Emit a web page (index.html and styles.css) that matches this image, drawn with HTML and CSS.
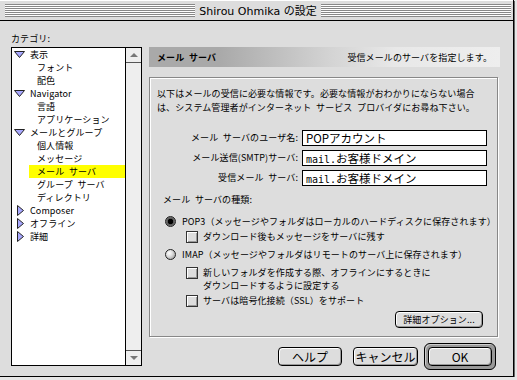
FILE: index.html
```html
<!DOCTYPE html>
<html lang="ja">
<head>
    <meta charset="UTF-8">
    <meta name="viewport" content="width=device-width, initial-scale=1.0">
    <title>Shirou Ohmika の設定</title>
    <link rel="stylesheet" href="styles.css">
</head>
<body>

    <div class="window">
        <div class="titlebar">
            <span class="stripes"></span>
            <span class="title">Shirou Ohmika の設定</span>
            <span class="stripes"></span>
        </div>

        <div class="content">
            <!-- Category tree -->
            <div class="sidebar">
                <div class="cat-label">カテゴリ:</div>
                <div class="listbox">
                    <ul class="tree">
                        <li class="row l1"><svg class="twisty" width="11" height="11"><polygon points="0.5,2.5 10.5,2.5 5.5,8.5"/></svg>表示</li>
                        <li class="row l2">フォント</li>
                        <li class="row l2">配色</li>
                        <li class="row l1"><svg class="twisty" width="11" height="11"><polygon points="0.5,2.5 10.5,2.5 5.5,8.5"/></svg>Navigator</li>
                        <li class="row l2">言語</li>
                        <li class="row l2">アプリケーション</li>
                        <li class="row l1"><svg class="twisty" width="11" height="11"><polygon points="0.5,2.5 10.5,2.5 5.5,8.5"/></svg>メールとグループ</li>
                        <li class="row l2">個人情報</li>
                        <li class="row l2">メッセージ</li>
                        <li class="row l2 sel">メール&ensp;サーバ</li>
                        <li class="row l2">グループ&ensp;サーバ</li>
                        <li class="row l2">ディレクトリ</li>
                        <li class="row l1"><svg class="twisty" width="11" height="11"><polygon points="3.5,0.5 9.5,5.5 3.5,10.5"/></svg>Composer</li>
                        <li class="row l1"><svg class="twisty" width="11" height="11"><polygon points="3.5,0.5 9.5,5.5 3.5,10.5"/></svg>オフライン</li>
                        <li class="row l1"><svg class="twisty" width="11" height="11"><polygon points="3.5,0.5 9.5,5.5 3.5,10.5"/></svg>詳細</li>
                    </ul>
                    <div class="scrollbar">
                        <div class="sb-btn up"><span class="arrow-up"></span></div>
                        <div class="sb-track"></div>
                        <div class="sb-btn down"><span class="arrow-down"></span></div>
                    </div>
                </div>
            </div>

            <!-- Panel -->
            <div class="main">
                <div class="panel-head">
                    <span class="panel-title">メール&ensp;サーバ</span>
                    <span class="panel-desc">受信メールのサーバを指定します。</span>
                </div>

                <div class="group">
                    <p class="intro">以下はメールの受信に必要な情報です。必要な情報がおわかりにならない場合<br>は、システム管理者がインターネット&ensp;サービス&ensp;プロバイダにお尋ね下さい。</p>

                    <div class="fields">
                        <div class="label">メール&ensp;サーバのユーザ名:</div>
                        <div class="input">POPアカウント</div>
                        <div class="label">メール送信(SMTP)サーバ:</div>
                        <div class="input"><span class="mono">mail.</span>お客様ドメイン</div>
                        <div class="label">受信メール&ensp;サーバ:</div>
                        <div class="input"><span class="mono">mail.</span>お客様ドメイン</div>
                    </div>

                    <div class="type-label">メール&ensp;サーバの種類:</div>

                    <div class="opt radio-row first">
                        <span class="radio on"></span>
                        <span>POP3（メッセージやフォルダはローカルのハードディスクに保存されます）</span>
                    </div>
                    <div class="opt check-row c1">
                        <span class="check-box"></span>
                        <span>ダウンロード後もメッセージをサーバに残す</span>
                    </div>
                    <div class="opt radio-row second">
                        <span class="radio"></span>
                        <span>IMAP（メッセージやフォルダはリモートのサーバ上に保存されます）</span>
                    </div>
                    <div class="opt check-row c2">
                        <span class="check-box"></span>
                        <span class="two-line">新しいフォルダを作成する際、オフラインにするときに<br>ダウンロードするように設定する</span>
                    </div>
                    <div class="opt check-row c3">
                        <span class="check-box"></span>
                        <span>サーバは暗号化接続（SSL）をサポート</span>
                    </div>

                    <div class="group-foot">
                        <button class="btn small">詳細オプション...</button>
                    </div>
                </div>

                <div class="buttons">
                    <button class="btn">ヘルプ</button>
                    <button class="btn cancel">キャンセル</button>
                    <div class="default-ring"><button class="btn">OK</button></div>
                </div>
            </div>
        </div>
    </div>

</body>
</html>
```

FILE: styles.css
```css
body {
    margin: 0;
    background-color: #e6e6e6;
    font-family: "Noto Sans CJK JP", sans-serif;
    font-size: 9px;
    letter-spacing: 0.1px;
    color: #000;
}
.window {
    width: 513px;
    height: 376px;
    background-color: #ddd;
    border-right: 1px solid #000;
    border-bottom: 1px solid #000;
    box-shadow: 1px 1px 0 #666;
    display: flex;
    flex-direction: column;
}
.titlebar {
    height: 20px;
    border-bottom: 1px solid #000;
    display: flex;
    align-items: center;
    gap: 4px;
    padding: 0 2px 0 5px;
    box-shadow: inset 0 1px #fff;
}
.stripes {
    flex: 1;
    height: 13px;
    background: repeating-linear-gradient(to bottom, #888 0 1px, #fff 1px 2px);
}
.title {
    font-family: "DejaVu Sans", "Noto Sans CJK JP", sans-serif;
    font-size: 11px;
    letter-spacing: 0;
    white-space: nowrap;
}
.content {
    flex: 1;
    display: flex;
    gap: 7px;
    padding-left: 11px;
}

/* Sidebar */
.sidebar {
    width: 131px;
    padding-top: 11px;
    display: flex;
    flex-direction: column;
}
.cat-label {
    height: 13px;
    line-height: 13px;
    margin-bottom: 2px;
}
.listbox {
    height: 319px;
    box-sizing: border-box;
    border: 1px solid #000;
    background-color: #fff;
    display: flex;
}
.tree {
    flex: 1;
    list-style: none;
    margin: 0;
    padding: 0;
}
.row {
    height: 13px;
    line-height: 13px;
    display: flex;
    align-items: center;
    white-space: nowrap;
}
.row.l1 {
    padding-left: 2px;
}
.row.l2 {
    margin-left: 17px;
    padding-left: 8px;
}
.row.sel {
    background-color: #ff0;
}
.twisty {
    margin-right: 5px;
    flex: none;
}
.twisty polygon {
    fill: #a8a8ff;
    stroke: #222;
    stroke-width: 1;
}
.scrollbar {
    width: 15px;
    border-left: 1px solid #000;
    background-color: #eee;
    display: flex;
    flex-direction: column;
}
.sb-btn {
    height: 14px;
    display: flex;
    align-items: center;
    justify-content: center;
}
.sb-btn.up {
    border-bottom: 1px solid #555;
}
.sb-btn.down {
    border-top: 1px solid #555;
}
.sb-track {
    flex: 1;
}
.arrow-up {
    width: 0;
    height: 0;
    border-left: 4px solid transparent;
    border-right: 4px solid transparent;
    border-bottom: 4px solid #777;
}
.arrow-down {
    width: 0;
    height: 0;
    border-left: 4px solid transparent;
    border-right: 4px solid transparent;
    border-top: 4px solid #777;
}

/* Panel */
.main {
    width: 349px;
    padding-top: 26px;
    display: flex;
    flex-direction: column;
}
.panel-head {
    height: 20px;
    margin-right: -2px;
    padding: 0 8px 0 8px;
    display: flex;
    align-items: center;
    justify-content: space-between;
    background: linear-gradient(to right, #a9a9a9 0, #a9a9a9 20%, #d4d4d4 52%, #e8e8e8 70%, #eee 100%);
}
.panel-title {
    font-weight: bold;
}
.group {
    margin-top: 10px;
    height: 260px;
    box-sizing: border-box;
    border: 1px solid #888;
    box-shadow: inset 1px 1px #fff, 1px 1px #fff;
    padding: 9px 7px 0 7px;
    display: flex;
    flex-direction: column;
}
.intro {
    margin: 0;
    line-height: 14px;
    white-space: nowrap;
}
.fields {
    display: grid;
    grid-template-columns: 141px 185px;
    column-gap: 4px;
    row-gap: 4px;
    margin-top: 15px;
}
.label {
    text-align: right;
    line-height: 16px;
    white-space: nowrap;
}
.input {
    height: 16px;
    box-sizing: border-box;
    border: 1px solid #000;
    background-color: #fff;
    padding-left: 3px;
    font-size: 11.5px;
    letter-spacing: 0;
    line-height: 14px;
    white-space: nowrap;
}
.mono {
    font-family: "DejaVu Sans Mono", monospace;
    font-size: 10px;
}
.type-label {
    margin: 7px 0 0 6px;
    line-height: 13px;
}
.opt {
    display: flex;
    align-items: flex-start;
    line-height: 13px;
    white-space: nowrap;
}
.radio-row {
    margin-left: 8px;
    gap: 6px;
}
.radio-row.first {
    margin-top: 9px;
}
.radio-row.second {
    margin-top: 5px;
}
.check-row {
    margin-left: 29px;
    gap: 5px;
}
.check-row.c1 {
    margin-top: 2px;
}
.check-row.c2 {
    margin-top: 5px;
}
.check-row.c3 {
    margin-top: 2px;
}
.radio {
    width: 11px;
    height: 11px;
    margin-top: 1px;
    flex: none;
    box-sizing: border-box;
    border-radius: 50%;
    border: 1px solid #222;
    background: radial-gradient(circle at 35% 35%, #fff 0, #ddd 40%, #8a8a8a 100%);
}
.radio.on {
    background: radial-gradient(circle, #000 0 2.5px, #555 3px, #999 100%);
}
.check-box {
    width: 12px;
    height: 12px;
    margin-top: 1px;
    flex: none;
    box-sizing: border-box;
    border: 1px solid #333;
    background-color: #ddd;
    box-shadow: inset 1px 1px #fff, inset -1px -1px #999;
}
.group-foot {
    display: flex;
    justify-content: flex-end;
    margin-top: 4px;
    margin-right: 7px;
}

/* Buttons */
.btn {
    width: 64px;
    height: 19px;
    padding: 0;
    border: 1px solid #000;
    border-radius: 4px;
    background-color: #ddd;
    box-shadow: inset 1px 1px #fff, inset -1px -1px #999;
    font-family: "Noto Sans CJK JP", sans-serif;
    font-size: 12px;
    letter-spacing: 0;
    color: #000;
    line-height: 17px;
}
.btn.small {
    width: 88px;
    height: 17px;
    font-size: 9px;
    letter-spacing: 0.1px;
    line-height: 15px;
}
.buttons {
    display: flex;
    justify-content: flex-end;
    align-items: center;
    margin-top: 6px;
    padding-right: 2px;
}
.btn.cancel {
    width: 65px;
    margin-left: 11px;
    margin-right: 6px;
}
.default-ring {
    padding: 3px;
    border: 1px solid #000;
    border-radius: 6px;
    background-color: #999;
    box-shadow: inset 1px 1px #ccc;
    display: flex;
}
```
